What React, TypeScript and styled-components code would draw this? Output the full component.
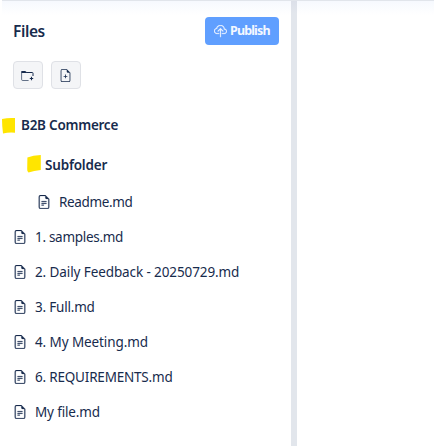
import React from 'react';
import styled, { createGlobalStyle } from 'styled-components';
import { BsCloudUpload, BsFileEarmarkPlus, BsFileEarmarkText } from 'react-icons/bs';

const GlobalStyle = createGlobalStyle`
  * { box-sizing: border-box; }
  body { margin: 0; background: #fff; overflow: hidden; }
  svg { display: block; flex: none; }
`;

const Page = styled.div`
  height: 446px;
  display: flex;
  flex-direction: column;
  color: #172b4d;
  font-family: 'Noto Sans', sans-serif;
`;

const TopRule = styled.div`
  height: 1px;
  flex: none;
  margin-left: 2px;
  background: #e1e5eb;
`;

const Workspace = styled.main`
  flex: 1;
  display: grid;
  grid-template-columns: 289px 6px 1fr;
  margin-left: 2px;
  background: linear-gradient(#f6f9fe, #fff 14px);
`;

const Sidebar = styled.aside`
  padding: 16px 12px 0 0;
`;

const Divider = styled.div`
  background: linear-gradient(#dce0e9, #e2e6ec 12px);
`;

const Header = styled.header`
  height: 28px;
  display: flex;
  align-items: center;
  justify-content: space-between;
  padding-left: 11px;
`;

const Title = styled.h1`
  margin: 0;
  font-size: 15.5px;
  font-weight: 600;
  line-height: 28px;
  letter-spacing: -0.4px;
`;

const PublishButton = styled.button`
  width: 74px;
  height: 28px;
  padding: 0 0 0 9px;
  border: 0;
  border-radius: 4px;
  display: flex;
  align-items: center;
  gap: 3px;
  background: #609fff;
  color: #f4f8ff;
  font: 700 12.5px/28px 'Noto Sans', sans-serif;
  letter-spacing: -0.85px;

  svg { stroke: currentColor; stroke-width: 0.3px; }
`;

const Toolbar = styled.div`
  display: flex;
  gap: 8px;
  padding: 16px 0 0 11px;
`;

const IconButton = styled.button`
  width: 30px;
  height: 28px;
  padding: 1px 1px 0 0;
  display: flex;
  align-items: center;
  justify-content: center;
  border: 1px solid #dfe1e6;
  border-radius: 4px;
  background: #f4f5f7;
  color: #172b4d;
`;

const Tree = styled.div`
  padding-top: 16px;
`;

const FolderRow = styled.div<{ $indent: number; $height: number; $gap: number; $after?: number }>`
  height: ${({ $height }) => $height}px;
  margin-bottom: ${({ $after = 0 }) => $after}px;
  padding-left: ${({ $indent }) => $indent}px;
  display: flex;
  align-items: center;
  gap: ${({ $gap }) => $gap}px;
`;

const FileRow = styled.div<{ $indent: number }>`
  height: 35px;
  padding-left: ${({ $indent }) => $indent}px;
  display: flex;
  align-items: center;
  gap: 8px;

  svg { margin-top: 1px; stroke: currentColor; stroke-width: 0.25px; }
`;

const Label = styled.span<{ $spacing: number; $bold?: boolean }>`
  font-size: 13.5px;
  font-weight: ${({ $bold }) => ($bold ? 600 : 400)};
  line-height: 20px;
  white-space: pre;
  letter-spacing: ${({ $spacing }) => $spacing}px;
`;

const MarkerShape = styled.svg<{ $lift: number }>`
  margin-bottom: ${({ $lift }) => $lift}px;
`;

const Marker = ({ path, lift = 0 }: { path: string; lift?: number }) => (
  <MarkerShape $lift={lift} width="14" height="18" viewBox="0 0 14 18" fill="#ffe500"><path d={path} /></MarkerShape>
);

const FolderPlus = () => (
  <svg width="13" height="12" viewBox="0 0 13 12" fill="none" stroke="currentColor">
    <path d="M.6 2.5V1.5H4.5L5.7 2.5H11.4Q12 2.5 12 3.2V6M.6 2.5H5.8" />
    <path d="M.6 2.5V9.4Q.6 10.5 1.7 10.5H7.6" strokeOpacity=".65" />
    <path d="M10.5 6.8V10.2M8.8 8.5H12.2" strokeWidth="1.1" />
  </svg>
);

const files = [
  { name: 'Readme.md', indent: 35, spacing: -0.35 },
  { name: '1. samples.md', indent: 11, spacing: -0.3 },
  { name: '2. Daily Feedback - 20250729.md', indent: 11, spacing: -0.1 },
  { name: '3. Full.md', indent: 11, spacing: -0.2 },
  { name: '4. My Meeting.md', indent: 11, spacing: -0.1 },
  { name: '6. REQUIREMENTS.md', indent: 11, spacing: -0.2 },
  { name: 'My file.md', indent: 11, spacing: -0.15 },
];

export default function App() {
  return (
    <Page>
      <GlobalStyle />
      <TopRule />
      <Workspace>
        <Sidebar>
          <Header>
            <Title>Files</Title>
            <PublishButton><BsCloudUpload size={13} />Publish</PublishButton>
          </Header>
          <Toolbar>
            <IconButton aria-label="New folder"><FolderPlus /></IconButton>
            <IconButton aria-label="New file"><BsFileEarmarkPlus size={13} /></IconButton>
          </Toolbar>
          <Tree>
            <FolderRow $indent={0} $height={40} $gap={5} $after={1}>
              <Marker path="M0 3 Q6 1.5 13 2 V16.8 Q7 16.2 1 17.5 Q0 10 0 3Z" />
              <Label $bold $spacing={-0.25}>B2B Commerce</Label>
            </FolderRow>
            <FolderRow $indent={25} $height={38} $gap={4}>
              <Marker lift={2} path="M.4 2.5 Q6 .2 13.8 0 V15 Q7 15.5 1.5 17.5 Q0 17 .2 14Z" />
              <Label $bold $spacing={-0.2}>Subfolder</Label>
            </FolderRow>
            {files.map(({ name, indent, spacing }) => (
              <FileRow key={name} $indent={indent}>
                <BsFileEarmarkText size={14} />
                <Label $spacing={spacing}>{name}</Label>
              </FileRow>
            ))}
          </Tree>
        </Sidebar>
        <Divider />
      </Workspace>
    </Page>
  );
}
